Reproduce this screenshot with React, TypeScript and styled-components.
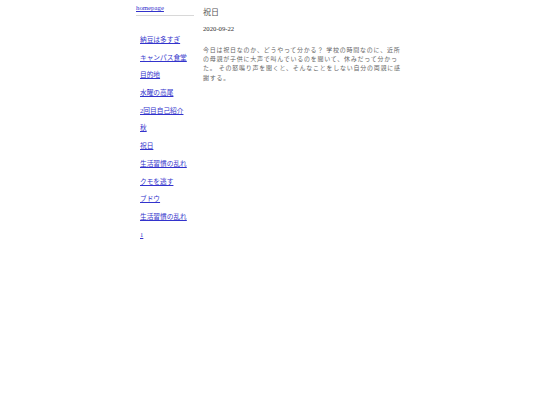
import { createGlobalStyle, styled } from 'styled-components';

const GlobalStyle = createGlobalStyle`
  html, body {
    margin: 0;
    padding: 0;
    background: #ffffff;
    font-family: "Liberation Serif", "Noto Sans CJK JP", serif;
  }
`;

const Page = styled.div`
  width: 268px;
  margin: 0 auto;
  display: flex;
  align-items: flex-start;
  gap: 9px;
`;

const Sidebar = styled.nav`
  width: 58px;
  flex-shrink: 0;
`;

const HomeLink = styled.a`
  display: block;
  font-size: 6.8px;
  line-height: 9px;
  padding-top: 3px;
  padding-bottom: 3px;
  color: #3333cc;
  text-decoration: underline;
  border-bottom: 1px solid #d8d8d8;
`;

const LinkList = styled.ul`
  list-style: none;
  margin: 0;
  padding: 19px 0 0 4px;
  display: flex;
  flex-direction: column;
  gap: 8.7px;
`;

const NavLink = styled.a`
  display: block;
  font-size: 6.7px;
  line-height: 9px;
  color: #3333cc;
  text-decoration: underline;
  white-space: nowrap;
`;

const Article = styled.main`
  flex: 1;
  padding-top: 8px;
`;

const Title = styled.h1`
  margin: 0;
  font-size: 8px;
  line-height: 10px;
  font-weight: normal;
  color: #555555;
`;

const DateText = styled.div`
  margin-top: 6px;
  font-size: 6.7px;
  line-height: 9px;
  color: #333333;
`;

const Body = styled.p`
  margin: 13px 0 0;
  font-size: 6px;
  line-height: 9.2px;
  letter-spacing: 0.75px;
  color: #666666;
  width: 198px;
`;

const links = [
  '納豆は多すぎ',
  'キャンパス食堂',
  '目的地',
  '水曜の高尾',
  '2回目自己紹介',
  '秋',
  '祝日',
  '生活習慣の乱れ',
  'クモを逃す',
  'ブドウ',
  '生活習慣の乱れ',
  '1',
];

export default function App() {
  return (
    <>
      <GlobalStyle />
      <Page>
        <Sidebar>
          <HomeLink href="#">homepage</HomeLink>
          <LinkList>
            {links.map((l, i) => (
              <li key={`${i}-${l}`}>
                <NavLink href="#">{l}</NavLink>
              </li>
            ))}
          </LinkList>
        </Sidebar>
        <Article>
          <Title>祝日</Title>
          <DateText>2020-09-22</DateText>
          <Body>
            今日は祝日なのか、どうやって分かる？ 学校の時間なのに、近所の母親が子供に大声で叫んでいるのを聞いて、休みだって分かった。 その怒鳴り声を聞くと、そんなことをしない自分の両親に感謝する。
          </Body>
        </Article>
      </Page>
    </>
  );
}
